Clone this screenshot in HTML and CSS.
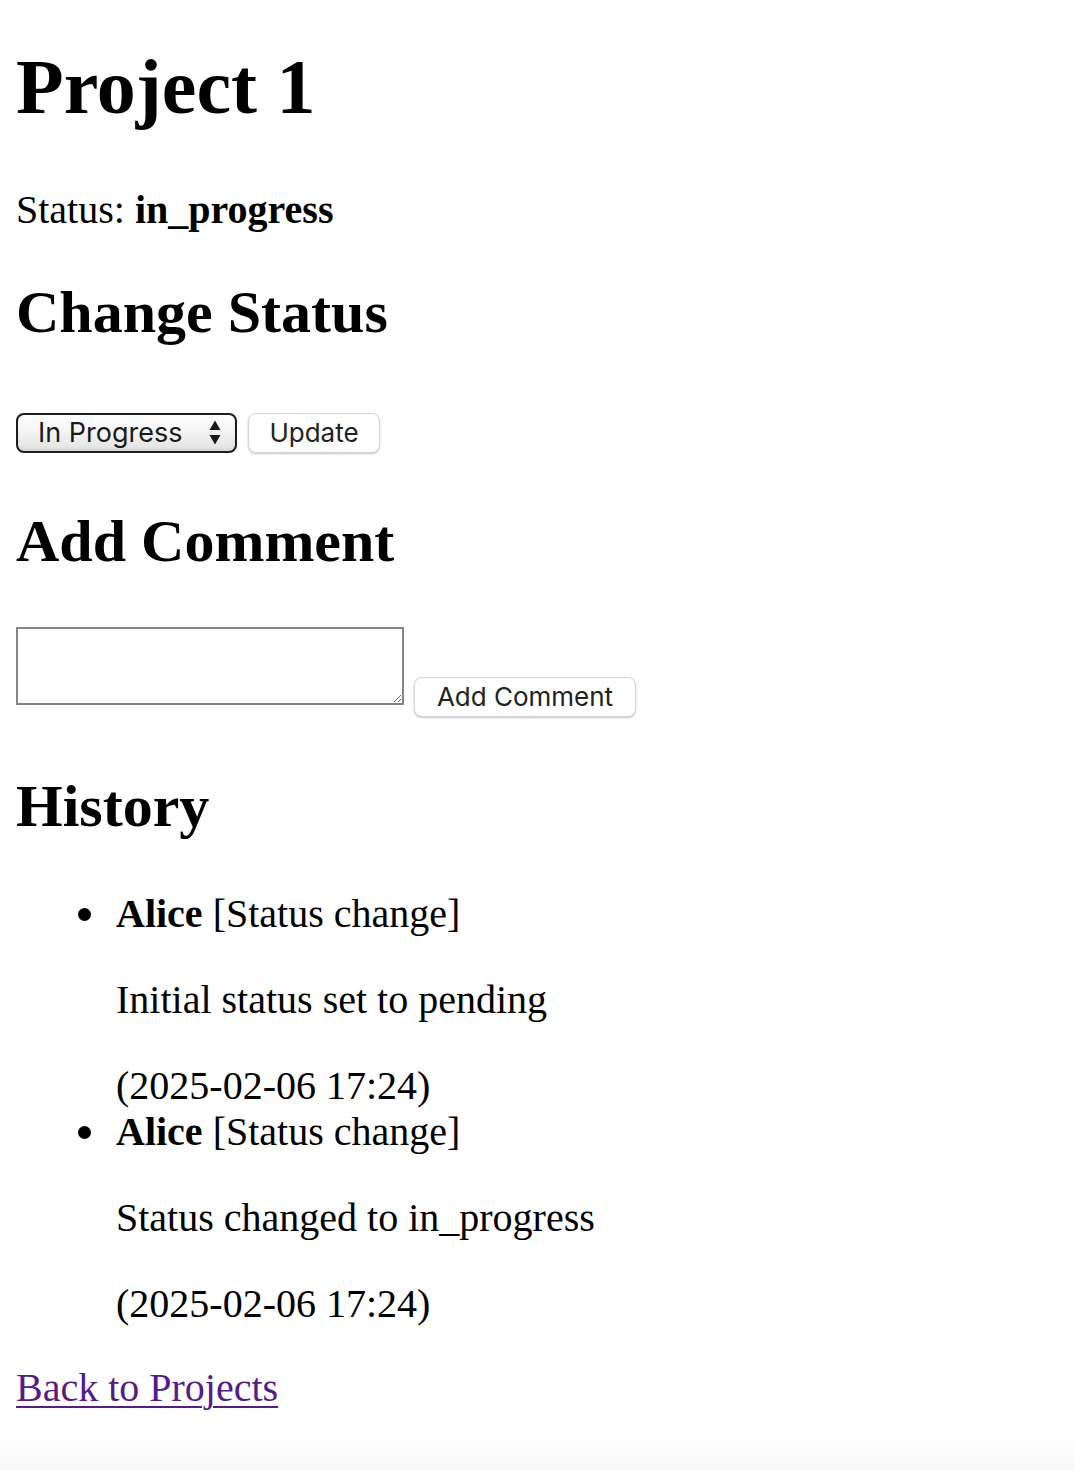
FILE: index.html
```html
<!DOCTYPE html>
<html lang="en">
<head>
<meta charset="utf-8">
<title>Project 1</title>
<link rel="stylesheet" href="styles.css">
</head>
<body>
  <h1 class="title">Project 1</h1>
  <p class="status">Status: <strong>in_progress</strong></p>

  <h2 class="section section-status">Change Status</h2>
  <form class="status-form">
    <div class="select-wrap">
      <select class="select">
        <option>Pending</option>
        <option selected>In Progress</option>
        <option>Done</option>
      </select>
      <svg class="select-arrows" width="12" height="25" viewBox="0 0 12 25" aria-hidden="true">
        <path d="M6 0.5 L11.5 10 L0.5 10 Z" fill="#1a1a1a"/>
        <path d="M6 24.5 L11.5 15 L0.5 15 Z" fill="#1a1a1a"/>
      </svg>
    </div>
    <button type="button" class="btn btn-update">Update</button>
  </form>

  <h2 class="section section-comment">Add Comment</h2>
  <form class="comment-form">
    <textarea class="comment-box"></textarea>
    <button type="button" class="btn btn-comment">Add Comment</button>
  </form>

  <h2 class="section section-history">History</h2>
  <ul class="history">
    <li class="entry">
      <strong>Alice</strong> [Status change]
      <p class="entry-text">Initial status set to pending</p>
      (2025-02-06 17:24)
    </li>
    <li class="entry">
      <strong>Alice</strong> [Status change]
      <p class="entry-text">Status changed to in_progress</p>
      (2025-02-06 17:24)
    </li>
  </ul>

  <a class="back" href="#">Back to Projects</a>
</body>
</html>
```

FILE: styles.css
```css
html {
  min-height: 100%;
  background: linear-gradient(to bottom, #ffffff 0, #ffffff calc(100% - 40px), #f7f7f7 100%);
}

body {
  margin: 0 16px;
  display: flex;
  flex-direction: column;
  align-items: flex-start;
  font-family: "Liberation Serif", "Times New Roman", serif;
  font-size: 40px;
  line-height: 46px;
  color: #000000;
}

.title {
  margin: 42px 0 0;
  font-size: 78px;
  line-height: 90px;
  font-weight: bold;
}

.status {
  margin: 55px 0 0;
}

.section {
  margin: 0;
  font-size: 60px;
  line-height: 69px;
  font-weight: bold;
}

.section-status {
  margin-top: 45px;
}

.section-comment {
  margin-top: 54px;
}

.section-history {
  margin-top: 55px;
}

.status-form {
  margin: 66px 0 0;
  display: flex;
  align-items: flex-start;
  gap: 11px;
}

.select-wrap {
  position: relative;
  width: 221px;
  height: 40px;
}

.select {
  display: block;
  appearance: none;
  -webkit-appearance: none;
  box-sizing: border-box;
  width: 100%;
  height: 100%;
  margin: 0;
  padding: 0 0 0 20px;
  border: 2px solid #1c1c1c;
  border-radius: 8px;
  background: linear-gradient(#ffffff 0%, #f4f4f4 45%, #e2e2e2 100%);
  box-shadow: inset 0 -2px 3px rgba(0, 0, 0, 0.06);
  font-family: Inter, "Liberation Sans", sans-serif;
  font-size: 27px;
  color: #1a1a1a;
  line-height: 36px;
}

.select-arrows {
  position: absolute;
  right: 16px;
  top: 7px;
  pointer-events: none;
}

.btn {
  box-sizing: border-box;
  height: 40px;
  margin: 0;
  padding: 0 20px;
  border: 1px solid #d6d6d6;
  border-radius: 8px;
  background: #ffffff;
  box-shadow: 0 1px 2px rgba(0, 0, 0, 0.22);
  font-family: Inter, "Liberation Sans", sans-serif;
  font-size: 26px;
  color: #222222;
  line-height: 38px;
}

.btn-update {
  width: 132px;
}

.comment-form {
  margin: 51px 0 0;
  display: flex;
  align-items: flex-start;
  gap: 10px;
}

.comment-box {
  box-sizing: border-box;
  width: 388px;
  height: 78px;
  margin: 0;
  border: 2px solid #858585;
  border-radius: 0;
  background: #ffffff;
  font-family: "Liberation Mono", monospace;
  font-size: 26px;
}

.btn-comment {
  width: 222px;
  margin-top: 50px;
}

.history {
  margin: 50px 0 0;
  padding: 0 0 0 100px;
  list-style: none;
}

.entry {
  position: relative;
}

.entry::before {
  content: "";
  position: absolute;
  left: -38px;
  top: 17px;
  width: 13px;
  height: 13px;
  border-radius: 50%;
  background: #000000;
}

.entry-text {
  margin: 40px 0;
}

.back {
  margin-top: 38px;
  color: #551a8b;
  text-decoration: underline;
  text-decoration-thickness: 2px;
  text-underline-offset: 5px;
}
```
